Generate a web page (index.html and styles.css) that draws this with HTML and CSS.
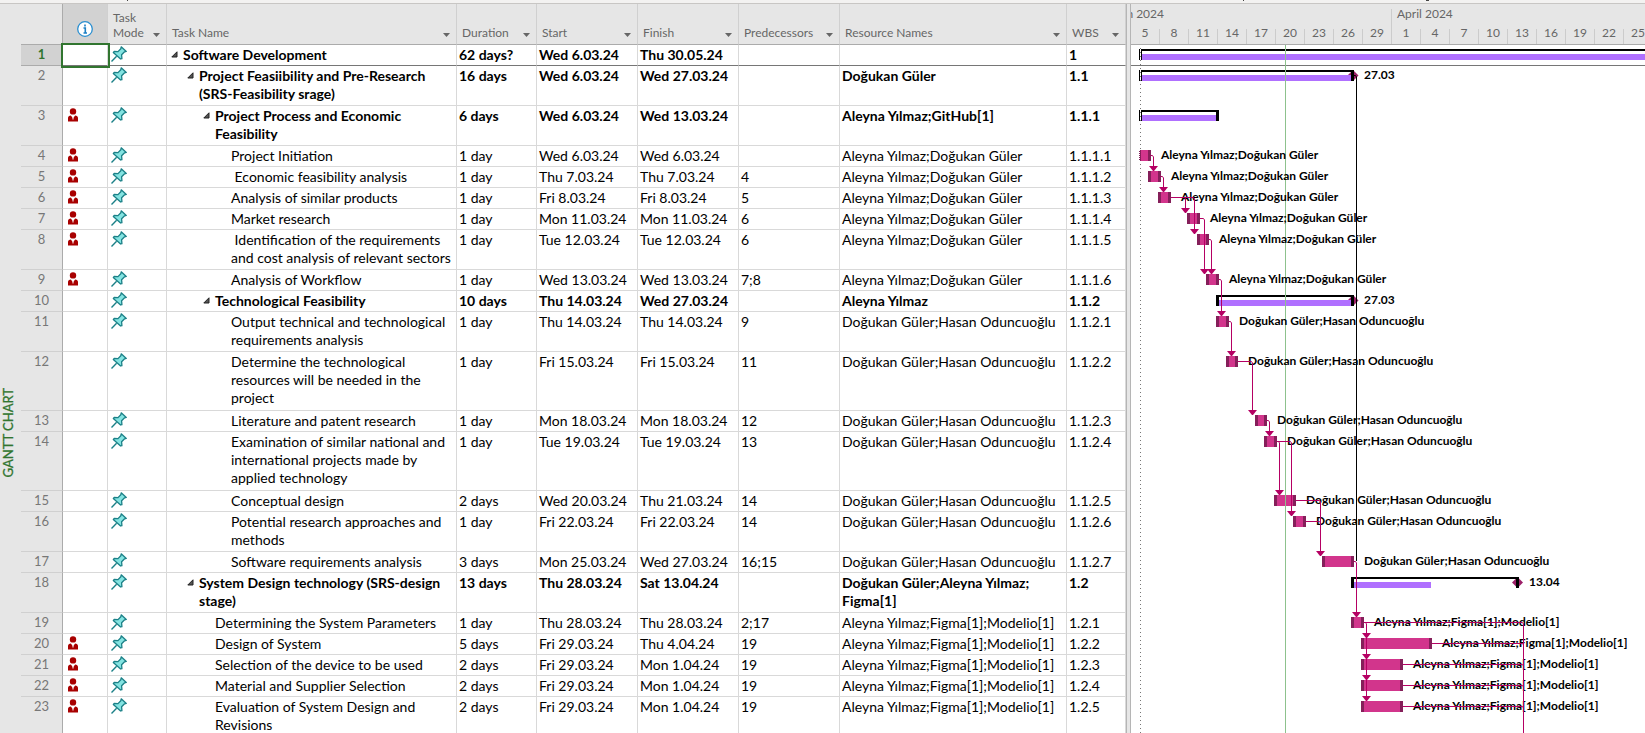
FILE: index.html
```html
<!DOCTYPE html>
<html lang="en">
<head>
<meta charset="utf-8">
<title>Software Development - Gantt Chart</title>
<link rel="stylesheet" href="styles.css">
</head>
<body>
<svg class="defs" aria-hidden="true">
  <defs>
    <symbol id="pin" viewBox="0 0 16 16">
      <path d="M.5 15.5 5.6 10.2" fill="none" stroke="#1b8087" stroke-width="1.4"/>
      <path d="M10.2.8 15.3 5.4 13.6 5.8 10.6 8.8 10.9 12.6 9.6 13 2.3 6.6 3.2 5.4 7 5.6 9.8 2.8Z" fill="#84e4e2" stroke="#1b8087" stroke-width="1.3" stroke-linejoin="round"/>
    </symbol>
    <symbol id="person" viewBox="0 0 12 14">
      <circle cx="6" cy="3.4" r="3.2" fill="#a80000"/>
      <path d="M1 13.4V10C1 8.2 2.2 7.6 3.8 7.4L6 10.2 8.2 7.4C9.800 7.600 11 8.200 11 10V13.400Z" fill="#a80000"/>
      <path d="M6 9.200V11.500" stroke="#fff" stroke-width="1"/>
    </symbol>
    <symbol id="fold" viewBox="0 0 7 7"><path d="M6 .8V6H.8Z" fill="#555" stroke="#222"/></symbol>
    <symbol id="down" viewBox="0 0 7 4"><path d="M0 0H7L3.500 4Z" fill="#666"/></symbol>
  </defs>
</svg>
<div class="app">
  <div class="ribbon-edge"><svg aria-hidden="true"><path d="M127 .5H128M1243 .5H1244M1426 .5H1429"/></svg></div>
  <main class="view">
    <aside class="view-name"><span>GANTT CHART</span></aside>
    <table class="sheet">
      <colgroup><col class="c-num"><col class="c-info"><col class="c-mode"><col class="c-name"><col class="c-dur"><col class="c-date"><col class="c-date"><col class="c-date"><col class="c-res"><col class="c-wbs"></colgroup>
      <thead>
        <tr>
          <th></th>
          <th class="info"><svg class="info-icon" viewBox="0 0 16 16"><circle cx="8" cy="8" r="7.300" fill="#fff" stroke="#2b8fd0" stroke-width="1.300"/><path d="M8 3.500V5.500M6.500 7H8.300V11.500M6.500 12H10" stroke="#1c7fc4" stroke-width="1.600" fill="none"/></svg></th>
          <th><div class="head"><span>Task<br>Mode</span><button aria-label="Filter Task Mode"><svg><use href="#down"/></svg></button></div></th>
          <th><div class="head"><span>Task Name</span><button aria-label="Filter Task Name"><svg><use href="#down"/></svg></button></div></th>
          <th><div class="head"><span>Duration</span><button aria-label="Filter Duration"><svg><use href="#down"/></svg></button></div></th>
          <th><div class="head"><span>Start</span><button aria-label="Filter Start"><svg><use href="#down"/></svg></button></div></th>
          <th><div class="head"><span>Finish</span><button aria-label="Filter Finish"><svg><use href="#down"/></svg></button></div></th>
          <th><div class="head"><span>Predecessors</span><button aria-label="Filter Predecessors"><svg><use href="#down"/></svg></button></div></th>
          <th><div class="head"><span>Resource Names</span><button aria-label="Filter Resource Names"><svg><use href="#down"/></svg></button></div></th>
          <th><div class="head"><span>WBS</span><button aria-label="Filter WBS"><svg><use href="#down"/></svg></button></div></th>
        </tr>
      </thead>
      <tbody>
        <tr class="bold current"><th>1</th><td class="selected"></td><td class="mode"><svg><use href="#pin"/></svg></td><td class="l1"><svg class="fold"><use href="#fold"/></svg>Software Development</td><td>62 days?</td><td>Wed 6.03.24</td><td>Thu 30.05.24</td><td></td><td></td><td>1</td></tr>
        <tr class="bold two"><th>2</th><td></td><td class="mode"><svg><use href="#pin"/></svg></td><td class="l2"><svg class="fold"><use href="#fold"/></svg>Project Feasiibility and Pre-Research<br>(SRS-Feasibility srage)</td><td>16 days</td><td>Wed 6.03.24</td><td>Wed 27.03.24</td><td></td><td>Doğukan Güler</td><td>1.1</td></tr>
        <tr class="bold two"><th>3</th><td class="who"><svg><use href="#person"/></svg></td><td class="mode"><svg><use href="#pin"/></svg></td><td class="l3"><svg class="fold"><use href="#fold"/></svg>Project Process and Economic<br>Feasibility</td><td>6 days</td><td>Wed 6.03.24</td><td>Wed 13.03.24</td><td></td><td>Aleyna Yılmaz;GitHub[1]</td><td>1.1.1</td></tr>
        <tr><th>4</th><td class="who"><svg><use href="#person"/></svg></td><td class="mode"><svg><use href="#pin"/></svg></td><td class="l4">Project Initiation</td><td>1 day</td><td>Wed 6.03.24</td><td>Wed 6.03.24</td><td></td><td>Aleyna Yılmaz;Doğukan Güler</td><td>1.1.1.1</td></tr>
        <tr><th>5</th><td class="who"><svg><use href="#person"/></svg></td><td class="mode"><svg><use href="#pin"/></svg></td><td class="l4">&nbsp;Economic feasibility analysis</td><td>1 day</td><td>Thu 7.03.24</td><td>Thu 7.03.24</td><td>4</td><td>Aleyna Yılmaz;Doğukan Güler</td><td>1.1.1.2</td></tr>
        <tr><th>6</th><td class="who"><svg><use href="#person"/></svg></td><td class="mode"><svg><use href="#pin"/></svg></td><td class="l4">Analysis of similar products</td><td>1 day</td><td>Fri 8.03.24</td><td>Fri 8.03.24</td><td>5</td><td>Aleyna Yılmaz;Doğukan Güler</td><td>1.1.1.3</td></tr>
        <tr><th>7</th><td class="who"><svg><use href="#person"/></svg></td><td class="mode"><svg><use href="#pin"/></svg></td><td class="l4">Market research</td><td>1 day</td><td>Mon 11.03.24</td><td>Mon 11.03.24</td><td>6</td><td>Aleyna Yılmaz;Doğukan Güler</td><td>1.1.1.4</td></tr>
        <tr class="two"><th>8</th><td class="who"><svg><use href="#person"/></svg></td><td class="mode"><svg><use href="#pin"/></svg></td><td class="l4">&nbsp;Identification of the requirements<br>and cost analysis of relevant sectors</td><td>1 day</td><td>Tue 12.03.24</td><td>Tue 12.03.24</td><td>6</td><td>Aleyna Yılmaz;Doğukan Güler</td><td>1.1.1.5</td></tr>
        <tr><th>9</th><td class="who"><svg><use href="#person"/></svg></td><td class="mode"><svg><use href="#pin"/></svg></td><td class="l4">Analysis of Workflow</td><td>1 day</td><td>Wed 13.03.24</td><td>Wed 13.03.24</td><td>7;8</td><td>Aleyna Yılmaz;Doğukan Güler</td><td>1.1.1.6</td></tr>
        <tr class="bold"><th>10</th><td></td><td class="mode"><svg><use href="#pin"/></svg></td><td class="l3"><svg class="fold"><use href="#fold"/></svg>Technological Feasibility</td><td>10 days</td><td>Thu 14.03.24</td><td>Wed 27.03.24</td><td></td><td>Aleyna Yılmaz</td><td>1.1.2</td></tr>
        <tr class="two"><th>11</th><td></td><td class="mode"><svg><use href="#pin"/></svg></td><td class="l4">Output technical and technological<br>requirements analysis</td><td>1 day</td><td>Thu 14.03.24</td><td>Thu 14.03.24</td><td>9</td><td>Doğukan Güler;Hasan Oduncuoğlu</td><td>1.1.2.1</td></tr>
        <tr class="three"><th>12</th><td></td><td class="mode"><svg><use href="#pin"/></svg></td><td class="l4">Determine the technological<br>resources will be needed in the<br>project</td><td>1 day</td><td>Fri 15.03.24</td><td>Fri 15.03.24</td><td>11</td><td>Doğukan Güler;Hasan Oduncuoğlu</td><td>1.1.2.2</td></tr>
        <tr><th>13</th><td></td><td class="mode"><svg><use href="#pin"/></svg></td><td class="l4">Literature and patent research</td><td>1 day</td><td>Mon 18.03.24</td><td>Mon 18.03.24</td><td>12</td><td>Doğukan Güler;Hasan Oduncuoğlu</td><td>1.1.2.3</td></tr>
        <tr class="three"><th>14</th><td></td><td class="mode"><svg><use href="#pin"/></svg></td><td class="l4">Examination of similar national and<br>international projects made by<br>applied technology</td><td>1 day</td><td>Tue 19.03.24</td><td>Tue 19.03.24</td><td>13</td><td>Doğukan Güler;Hasan Oduncuoğlu</td><td>1.1.2.4</td></tr>
        <tr><th>15</th><td></td><td class="mode"><svg><use href="#pin"/></svg></td><td class="l4">Conceptual design</td><td>2 days</td><td>Wed 20.03.24</td><td>Thu 21.03.24</td><td>14</td><td>Doğukan Güler;Hasan Oduncuoğlu</td><td>1.1.2.5</td></tr>
        <tr class="two"><th>16</th><td></td><td class="mode"><svg><use href="#pin"/></svg></td><td class="l4">Potential research approaches and<br>methods</td><td>1 day</td><td>Fri 22.03.24</td><td>Fri 22.03.24</td><td>14</td><td>Doğukan Güler;Hasan Oduncuoğlu</td><td>1.1.2.6</td></tr>
        <tr><th>17</th><td></td><td class="mode"><svg><use href="#pin"/></svg></td><td class="l4">Software requirements analysis</td><td>3 days</td><td>Mon 25.03.24</td><td>Wed 27.03.24</td><td>16;15</td><td>Doğukan Güler;Hasan Oduncuoğlu</td><td>1.1.2.7</td></tr>
        <tr class="bold two"><th>18</th><td></td><td class="mode"><svg><use href="#pin"/></svg></td><td class="l2"><svg class="fold"><use href="#fold"/></svg>System Design technology (SRS-design<br>stage)</td><td>13 days</td><td>Thu 28.03.24</td><td>Sat 13.04.24</td><td></td><td>Doğukan Güler;Aleyna Yılmaz;<br>Figma[1]</td><td>1.2</td></tr>
        <tr><th>19</th><td></td><td class="mode"><svg><use href="#pin"/></svg></td><td class="l3">Determining the System Parameters</td><td>1 day</td><td>Thu 28.03.24</td><td>Thu 28.03.24</td><td>2;17</td><td>Aleyna Yılmaz;Figma[1];Modelio[1]</td><td>1.2.1</td></tr>
        <tr><th>20</th><td class="who"><svg><use href="#person"/></svg></td><td class="mode"><svg><use href="#pin"/></svg></td><td class="l3">Design of System</td><td>5 days</td><td>Fri 29.03.24</td><td>Thu 4.04.24</td><td>19</td><td>Aleyna Yılmaz;Figma[1];Modelio[1]</td><td>1.2.2</td></tr>
        <tr><th>21</th><td class="who"><svg><use href="#person"/></svg></td><td class="mode"><svg><use href="#pin"/></svg></td><td class="l3">Selection of the device to be used</td><td>2 days</td><td>Fri 29.03.24</td><td>Mon 1.04.24</td><td>19</td><td>Aleyna Yılmaz;Figma[1];Modelio[1]</td><td>1.2.3</td></tr>
        <tr><th>22</th><td class="who"><svg><use href="#person"/></svg></td><td class="mode"><svg><use href="#pin"/></svg></td><td class="l3">Material and Supplier Selection</td><td>2 days</td><td>Fri 29.03.24</td><td>Mon 1.04.24</td><td>19</td><td>Aleyna Yılmaz;Figma[1];Modelio[1]</td><td>1.2.4</td></tr>
        <tr class="two"><th>23</th><td class="who"><svg><use href="#person"/></svg></td><td class="mode"><svg><use href="#pin"/></svg></td><td class="l3">Evaluation of System Design and<br>Revisions</td><td>2 days</td><td>Fri 29.03.24</td><td>Mon 1.04.24</td><td>19</td><td>Aleyna Yılmaz;Figma[1];Modelio[1]</td><td>1.2.5</td></tr>
      </tbody>
    </table>
    <div class="splitter"></div>
    <section class="gantt">
      <header class="timescale">
        <div class="months"><span class="march">March 2024</span><span class="april">April 2024</span></div>
        <div class="days"><span>5</span><span>8</span><span>11</span><span>14</span><span>17</span><span>20</span><span>23</span><span>26</span><span>29</span><span>1</span><span>4</span><span>7</span><span>10</span><span>13</span><span>16</span><span>19</span><span>22</span><span>25</span></div>
      </header>
      <svg class="chart">
        <defs>
          <path id="tip" d="M-4.500 0H4.500L.5 5H-.5Z"/>
          <path id="diamond" d="M0-5.500 5.500 0 0 5.500-5.500 0Z" fill="#9c2068"/>
        </defs>
        <!-- drawn on a grid whose origin is 1131,45 from the window corner -->
        <g transform="translate(-1131 -45)">
          <path class="row-line" d="M1131 65.500H3000"/>
          <path class="start-line" d="M1140.500 48V1000"/>
          <use href="#diamond" x="1353" y="75.500"/>
          <use href="#diamond" x="1353" y="300.500"/>
          <use href="#diamond" x="1517.500" y="582.500"/>
          <g class="progress">
            <rect x="1142" y="54" width="1800" height="6"/>
            <rect x="1142" y="75" width="209" height="6"/>
            <rect x="1142" y="115" width="74" height="6"/>
            <rect x="1219" y="300" width="132" height="6"/>
            <rect x="1354" y="582" width="77" height="6"/>
          </g>
          <g class="summary">
            <path d="M1142 49H3000V51H1142ZM1139 49H1140V60H1139ZM1141 49H1142V60H1141Z"/>
            <path d="M1142 70H1354V81H1351V72H1142ZM1139 70H1140V81H1139ZM1141 70H1142V81H1141Z"/>
            <path d="M1142 110H1219V121H1216V112H1142ZM1139 110H1140V121H1139ZM1141 110H1142V121H1141Z"/>
            <path d="M1216 295H1354V306H1351V297H1219V306H1216Z"/>
            <path d="M1351 577H1519V588H1516V579H1354V588H1351Z"/>
          </g>
          <g class="edge">
            <path d="M1139 150H1151V161H1139ZM1148 171H1161V182H1148ZM1158 192H1171V203H1158ZM1187 213H1200V224H1187ZM1197 234H1209V245H1197ZM1206 274H1219V285H1206ZM1216 316H1229V327H1216ZM1226 356H1238V367H1226ZM1255 415H1267V426H1255ZM1264 436H1277V447H1264ZM1274 495H1296V506H1274ZM1293 516H1306V527H1293ZM1322 556H1354V567H1322ZM1351 617H1364V628H1351ZM1361 638H1432V649H1361ZM1361 659H1403V670H1361ZM1361 680H1403V691H1361ZM1361 701H1403V712H1361Z"/>
          </g>
          <g class="task">
            <path d="M1141 150H1148V161H1141ZM1151 171H1158V182H1151ZM1161 192H1168V203H1161ZM1190 213H1197V224H1190ZM1200 234H1206V245H1200ZM1209 274H1216V285H1209ZM1219 316H1226V327H1219ZM1229 356H1235V367H1229ZM1258 415H1264V426H1258ZM1267 436H1274V447H1267ZM1277 495H1293V506H1277ZM1296 516H1303V527H1296ZM1325 556H1351V567H1325ZM1354 617H1361V628H1354ZM1364 638H1429V649H1364ZM1364 659H1400V670H1364ZM1364 680H1400V691H1364ZM1364 701H1400V712H1364Z"/>
          </g>
          <path d="M1139.500 150V161" stroke="#fff" stroke-dasharray="1 1"/>
          <path class="today" d="M1285.500 45V1000"/>
          <g class="label">
            <text x="1364" y="79">27.03</text>
            <text x="1161" y="159">Aleyna Yılmaz;Doğukan Güler</text>
            <text x="1171" y="180">Aleyna Yılmaz;Doğukan Güler</text>
            <text x="1181" y="201">Aleyna Yılmaz;Doğukan Güler</text>
            <text x="1210" y="222">Aleyna Yılmaz;Doğukan Güler</text>
            <text x="1219" y="243">Aleyna Yılmaz;Doğukan Güler</text>
            <text x="1229" y="283">Aleyna Yılmaz;Doğukan Güler</text>
            <text x="1364" y="304">27.03</text>
            <text x="1239" y="325">Doğukan Güler;Hasan Oduncuoğlu</text>
            <text x="1248" y="365">Doğukan Güler;Hasan Oduncuoğlu</text>
            <text x="1277" y="424">Doğukan Güler;Hasan Oduncuoğlu</text>
            <text x="1287" y="445">Doğukan Güler;Hasan Oduncuoğlu</text>
            <text x="1306" y="504">Doğukan Güler;Hasan Oduncuoğlu</text>
            <text x="1316" y="525">Doğukan Güler;Hasan Oduncuoğlu</text>
            <text x="1364" y="565">Doğukan Güler;Hasan Oduncuoğlu</text>
            <text x="1529" y="586">13.04</text>
            <text x="1374" y="626">Aleyna Yılmaz;Figma[1];Modelio[1]</text>
            <text x="1442" y="647">Aleyna Yılmaz;Figma[1];Modelio[1]</text>
            <text x="1413" y="668">Aleyna Yılmaz;Figma[1];Modelio[1]</text>
            <text x="1413" y="689">Aleyna Yılmaz;Figma[1];Modelio[1]</text>
            <text x="1413" y="710">Aleyna Yılmaz;Figma[1];Modelio[1]</text>
          </g>
          <path class="critical" d="M1354 75.500H1355.500L1356.500 77V561"/>
          <g class="link">
            <path d="M1151 155.500H1152.500L1153.500 157V168M1161 176.500H1162.500L1163.500 178V189M1171 197.500H1184.500L1185.500 199V210M1171 197.500H1193.500L1194.500 199V231M1200 218.500H1203.500L1204.500 220V271M1209 239.500H1210.500L1211.500 241V271M1219 279.500H1220.500L1221.500 281V313M1229 321.500H1230.500L1231.500 323V353M1238 361.500H1251.500L1252.500 363V412M1267 420.500H1268.500L1269.500 422V433M1277 441.500H1278.500L1279.500 443V492M1277 441.500H1290.500L1291.500 443V513M1296 500.500H1319.500L1320.500 502V553M1306 521.500H1319.500L1320.500 523M1354 561.500H1355.500L1356.500 563V614M1364 622.500H1365.500L1366.500 624V698M1364 622.500H1522.500L1523.500 624V1000M1432 643.500H1522.500L1523.500 645M1403 664.500H1522.500L1523.500 666M1403 685.500H1522.500L1523.500 687M1403 706.500H1522.500L1523.500 708"/>
          </g>
          <g class="tips">
            <use href="#tip" x="1153.500" y="166"/><use href="#tip" x="1163.500" y="187"/><use href="#tip" x="1185.500" y="208"/><use href="#tip" x="1194.500" y="229"/><use href="#tip" x="1204.500" y="269"/><use href="#tip" x="1211.500" y="269"/><use href="#tip" x="1221.500" y="311"/><use href="#tip" x="1231.500" y="351"/><use href="#tip" x="1252.500" y="410"/><use href="#tip" x="1269.500" y="431"/><use href="#tip" x="1279.500" y="490"/><use href="#tip" x="1291.500" y="511"/><use href="#tip" x="1320.500" y="551"/><use href="#tip" x="1356.500" y="612"/><use href="#tip" x="1366.500" y="633"/><use href="#tip" x="1366.500" y="654"/><use href="#tip" x="1366.500" y="675"/><use href="#tip" x="1366.500" y="696"/>
          </g>
        </g>
      </svg>
    </section>
  </main>
</div>
</body>
</html>
```
FILE: styles.css
```css
* { box-sizing: border-box; }
body { margin: 0; font-family: Lato, "Open Sans", sans-serif; font-size: 14px; color: #000; background: #fff; }
.defs { position: absolute; width: 0; height: 0; }
.app { height: 100vh; overflow: hidden; display: flex; flex-direction: column; }
.ribbon-edge { flex: none; height: 4px; background: #f3f2f1; border-bottom: 1px solid #c8c6c4; }
.ribbon-edge svg { display: block; width: 100%; height: 3px; stroke: #444; }
.view { flex: 1; min-height: 0; display: flex; align-items: stretch; overflow: hidden; }

.view-name { flex: none; width: 21px; padding: 384px 0 0; background: #e6e6e6; }
.view-name span { display: block; writing-mode: vertical-rl; transform: rotate(180deg); font-size: 13px; line-height: 16px; color: #31752f; white-space: nowrap; -webkit-text-stroke: .3px #31752f; }

.sheet { flex: none; align-self: flex-start; width: 1105px; table-layout: fixed; border-collapse: separate; border-spacing: 0; }
.c-num { width: 42px; }
.c-info { width: 45px; }
.c-mode { width: 59px; }
.c-name { width: 290px; }
.c-dur { width: 80px; }
.c-date { width: 101px; }
.c-res { width: 227px; }
.c-wbs { width: 59px; }

thead th { height: 41px; padding: 0; background: #e6e6e6; border-right: 1px solid #d0d0d0; border-bottom: 1px solid #ababab; font-size: 12px; font-weight: normal; line-height: 15px; color: #666; text-align: left; vertical-align: bottom; }
thead th:first-child { border-right-color: #ababab; }
thead th.info { background: #d2d2d2; text-align: center; }
.info-icon { display: block; width: 16px; height: 16px; margin: 0 auto 7px; }
.head { display: flex; justify-content: space-between; align-items: flex-end; padding: 0 6px 4px 5px; }
.head button { flex: none; padding: 0 0 3px; border: 0; background: none; }
.head button svg { display: block; width: 7px; height: 4px; }

tbody td, tbody th { height: 21px; padding: 1px 0 1px 2px; border-right: 1px solid #d9d9d9; border-bottom: 1px solid #d9d9d9; line-height: 18px; vertical-align: top; white-space: nowrap; }
.two td, .two th { height: 40px; }
.three td, .three th { height: 59px; }
tbody th { padding: 0; background: #e6e6e6; border-right-color: #ababab; border-bottom-color: #d0d0d0; font-size: 13px; font-weight: normal; color: #777; text-align: center; }
.bold td { font-weight: bold; }
.current td { border-bottom-color: #767676; }
.current th { background: #d2d2d2; border-bottom-color: #ababab; color: #31752f; font-weight: bold; }
.selected { outline: 2px solid #31752f; }
td.who { padding: 2px 0 0 4px; }
.who svg { display: block; width: 12px; height: 14px; }
td.mode { padding: 1px 0 0 3px; }
.mode svg { display: block; width: 16px; height: 16px; }
td.l1 { padding-left: 16px; }
td.l2 { padding-left: 32px; }
td.l3 { padding-left: 48px; }
td.l4 { padding-left: 64px; }
.fold { width: 7px; height: 7px; margin: 0 5px 2px -12px; vertical-align: baseline; }

.splitter { flex: none; width: 5px; background: #e6e6e6; border-left: 1px solid #b5b5b5; border-right: 1px solid #b5b5b5; cursor: col-resize; }

.gantt { flex: 1; min-width: 0; display: flex; flex-direction: column; overflow: hidden; }
.timescale { flex: none; height: 41px; display: flex; flex-direction: column; background: #e6e6e6; border-bottom: 1px solid #ababab; font-size: 12px; color: #666; overflow: hidden; }
.months, .days { display: flex; }
.months { height: 25px; padding-top: 5px; line-height: 10px; white-space: nowrap; }
.march { flex: none; width: 260px; display: flex; direction: rtl; padding-right: 227px; }
.april { flex: none; height: 20px; padding-left: 5px; border-left: 1px solid #ccc; }
.days { height: 15px; line-height: 8px; }
.days span { flex: none; width: 29px; border-right: 1px solid #ccc; text-align: center; }

.chart { flex: 1; display: block; width: 100%; min-height: 0; }
.today { stroke: #8dc28d; fill: none; }
.row-line { stroke: #767676; }
.start-line { stroke: #777; stroke-dasharray: 1 3; }
.progress { fill: #b070ff; }
.summary { fill: #000; }
.edge { fill: #851f5a; }
.task { fill: #d2358c; }
.label { font-size: 12px; font-weight: bold; }
.critical { fill: none; stroke: #000; }
.link { fill: none; stroke: #b50063; }
.tips { fill: #b50063; }
```
